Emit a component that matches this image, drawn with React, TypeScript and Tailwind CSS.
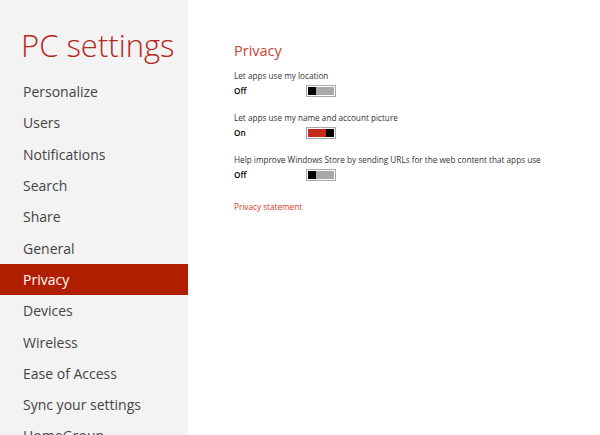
import React from "react";

const items = [
  "Personalize",
  "Users",
  "Notifications",
  "Search",
  "Share",
  "General",
  "Privacy",
  "Devices",
  "Wireless",
  "Ease of Access",
  "Sync your settings",
  "HomeGroup",
];

function Toggle({ on }: { on: boolean }) {
  return (
    <div className="w-[30px] h-[12px] border border-[#a8a8a8] p-[1px] bg-white flex shrink-0">
      {on ? (
        <>
          <div className="flex-1 bg-[#c42b1c]" />
          <div className="w-[8px] bg-black" />
        </>
      ) : (
        <>
          <div className="w-[8px] bg-black" />
          <div className="flex-1 bg-[#a9a9a9]" />
        </>
      )}
    </div>
  );
}

function Setting({ label, on }: { label: string; on: boolean }) {
  return (
    <div className="flex flex-col">
      <div className="text-[8.2px] leading-[12px] text-[#333]">{label}</div>
      <div className="flex items-center mt-[3px]">
        <div className="w-[72px] text-[8.2px] font-semibold text-black leading-[12px]">{on ? "On" : "Off"}</div>
        <Toggle on={on} />
      </div>
    </div>
  );
}

export default function App() {
  return (
    <div
      className="w-[600px] h-[435px] flex overflow-hidden bg-white"
      style={{ fontFamily: '"Open Sans", "Noto Sans", sans-serif' }}
    >
      <div className="w-[188px] h-full bg-[#f3f3f3] flex flex-col shrink-0 overflow-hidden">
        <div className="h-[76px] shrink-0 pl-[21px] pt-[25px] text-[31px] leading-[40px] font-light text-[#b5281a]">
          PC settings
        </div>
        {items.map((it) => (
          <div
            key={it}
            className={
              "h-[31.3px] shrink-0 pl-[23px] flex items-center text-[14px] " +
              (it === "Privacy" ? "bg-[#b01e00] text-white" : "text-[#444]")
            }
          >
            {it}
          </div>
        ))}
      </div>
      <div className="flex-1 pl-[46px] pt-[41px] relative">
        <div className="text-[14.5px] leading-[20px] text-[#c8442f]">Privacy</div>
        <div className="mt-[9px] flex flex-col gap-[15px]">
          <Setting label="Let apps use my location" on={false} />
          <Setting label="Let apps use my name and account picture" on={true} />
          <Setting label="Help improve Windows Store by sending URLs for the web content that apps use" on={false} />
        </div>
        <div className="mt-[20px] text-[8.2px] text-[#d8391f]">Privacy statement</div>
      </div>
    </div>
  );
}
